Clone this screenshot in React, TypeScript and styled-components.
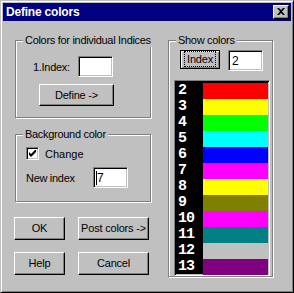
import React from 'react';
import styled, { createGlobalStyle } from 'styled-components';

const Global = createGlobalStyle`
  html, body { margin: 0; padding: 0; background: #c0c0c0; }
  body { font-family: "Liberation Sans", Arial, sans-serif; font-size: 11px; color: #000; }
  * { box-sizing: border-box; }
`;

const Window = styled.div`
  width: 294px;
  height: 293px;
  background: #c0c0c0;
  border: 1px solid;
  border-color: #c0c0c0 #000 #000 #c0c0c0;
  box-shadow: inset 1px 1px #fff, inset -1px -1px #808080;
  padding: 2px;
  display: flex;
  flex-direction: column;
`;

const TitleBar = styled.div`
  height: 18px;
  background: #000080;
  display: flex;
  align-items: center;
  justify-content: space-between;
  padding: 0 2px 0 3px;
`;

const TitleText = styled.span`
  color: #fff;
  font-weight: bold;
  font-size: 12px;
  letter-spacing: -0.2px;
`;

const CloseButton = styled.div`
  width: 16px;
  height: 14px;
  background: #c0c0c0;
  border: 1px solid;
  border-color: #fff #000 #000 #fff;
  box-shadow: inset -1px -1px #808080;
  display: flex;
  align-items: center;
  justify-content: center;
  padding-bottom: 1px;
  padding-right: 1px;
`;

const Body = styled.div`
  display: flex;
  padding: 19px 0 0 12px;
`;

const LeftCol = styled.div`
  width: 137px;
  display: flex;
  flex-direction: column;
`;

const Group = styled.div<{ $w: number; $h: number; $mt?: number; $pad: string }>`
  position: relative;
  width: ${p => p.$w}px;
  height: ${p => p.$h}px;
  margin-top: ${p => p.$mt ?? 0}px;
  padding: ${p => p.$pad};
  border: 1px solid #808080;
  box-shadow: inset 1px 1px #fff, 1px 1px #fff;
  display: flex;
  flex-direction: column;
  align-items: flex-start;
`;

const Caption = styled.span`
  position: absolute;
  top: -8px;
  left: 7px;
  padding: 0 2px;
  background: #c0c0c0;
  line-height: 14px;
  letter-spacing: -0.3px;
  white-space: nowrap;
`;

const Row = styled.div<{ $mt?: number; $ml?: number; $gap?: number; $top?: boolean }>`
  display: flex;
  align-items: ${p => (p.$top ? 'flex-start' : 'center')};
  margin-top: ${p => p.$mt ?? 0}px;
  margin-left: ${p => p.$ml ?? 0}px;
  gap: ${p => p.$gap ?? 0}px;
`;

const Label = styled.span<{ $w: number }>`
  width: ${p => p.$w}px;
  letter-spacing: -0.3px;
  white-space: nowrap;
`;

const Field = styled.div`
  width: 35px;
  height: 21px;
  background: #fff;
  border: 1px solid;
  border-color: #808080 #fff #fff #808080;
  box-shadow: inset 1px 1px #000, inset -1px -1px #c0c0c0;
  padding: 0 0 0 3px;
  display: flex;
  align-items: center;
  font-size: 12px;
`;

const Caret = styled.span`
  width: 1px;
  height: 14px;
  background: #000;
  margin-left: -1px;
`;

const Button = styled.div<{ $w: number; $h: number; $mt?: number; $ml?: number }>`
  width: ${p => p.$w}px;
  height: ${p => p.$h}px;
  margin-top: ${p => p.$mt ?? 0}px;
  margin-left: ${p => p.$ml ?? 0}px;
  background: #c0c0c0;
  border: 1px solid;
  border-color: #fff #000 #000 #fff;
  box-shadow: inset -1px -1px #808080;
  display: flex;
  align-items: center;
  justify-content: center;
  letter-spacing: -0.2px;
  white-space: nowrap;
  padding-bottom: 1px;
`;

const DefaultButton = styled(Button)`
  border-color: #000;
  box-shadow: inset 1px 1px #fff, inset -1px -1px #808080;
`;

const Focus = styled.span`
  outline: 1px dotted #000;
  outline-offset: 1px;
  padding: 0 1px;
  line-height: 12px;
`;

const CheckBox = styled.div`
  width: 13px;
  height: 13px;
  background: #fff;
  border: 1px solid;
  border-color: #808080 #fff #fff #808080;
  box-shadow: inset 1px 1px #000, inset -1px -1px #c0c0c0;
  display: flex;
  align-items: center;
  justify-content: center;
`;

const ButtonRow = styled.div<{ $mt: number }>`
  display: flex;
  gap: 13px;
  margin-top: ${p => p.$mt}px;
  margin-left: -1px;
`;

const RightGroup = styled(Group)`
  margin-left: 16px;
`;

const List = styled.div`
  width: 96px;
  height: 197px;
  margin-top: 9px;
  background: #000;
  border: 1px solid;
  border-color: #808080 #fff #fff #808080;
  box-shadow: inset 1px 1px #000, inset -1px -1px #c0c0c0;
  padding: 2px 2px 0 2px;
  display: grid;
  grid-template-columns: 26px 65px;
  grid-auto-rows: 16px;
  align-content: start;
`;

const Num = styled.span`
  color: #fff;
  font-family: "Liberation Mono", "DejaVu Sans Mono", monospace;
  font-weight: bold;
  font-size: 15px;
  letter-spacing: -1px;
  line-height: 16px;
  padding-left: 1px;
`;

const Swatch = styled.span<{ $c: string }>`
  background: ${p => p.$c};
`;

const colors: [number, string][] = [
  [2, '#ff0000'],
  [3, '#ffff00'],
  [4, '#00ff00'],
  [5, '#00ffff'],
  [6, '#0000ff'],
  [7, '#ff00ff'],
  [8, '#ffff00'],
  [9, '#808000'],
  [10, '#ff00ff'],
  [11, '#008080'],
  [12, '#c0c0c0'],
  [13, '#800080'],
];

export default function App() {
  return (
    <>
      <Global />
      <Window>
        <TitleBar>
          <TitleText>Define colors</TitleText>
          <CloseButton>
            <svg width="8" height="7" viewBox="0 0 8 7">
              <path d="M0 0h2l2 2 2-2h2L5 3.5 8 7H6L4 5 2 7H0l3-3.5z" fill="#000" />
            </svg>
          </CloseButton>
        </TitleBar>
        <Body>
          <LeftCol>
            <Group $w={136} $h={78} $pad="15px 0 0 17px">
              <Caption>Colors for individual Indices</Caption>
              <Row>
                <Label $w={45}>1.Index:</Label>
                <Field />
              </Row>
              <Button $w={75} $h={22} $mt={7} $ml={6}>Define -&gt;</Button>
            </Group>
            <Group $w={136} $h={68} $mt={16} $pad="12px 0 0 10px">
              <Caption>Background color</Caption>
              <Row $gap={6}>
                <CheckBox>
                  <svg width="7" height="7" viewBox="0 0 7 7">
                    <path d="M0 2v3l2 2 5-5V-1L2 4z" fill="#000" />
                  </svg>
                </CheckBox>
                <span>Change</span>
              </Row>
              <Row $mt={7}>
                <Label $w={67}>New index</Label>
                <Field>
                  <Caret />
                  7
                </Field>
              </Row>
            </Group>
            <ButtonRow $mt={15}>
              <Button $w={51} $h={23}>OK</Button>
              <Button $w={71} $h={23}>Post colors -&gt;</Button>
            </ButtonRow>
            <ButtonRow $mt={12}>
              <Button $w={51} $h={23}>Help</Button>
              <Button $w={71} $h={23}>Cancel</Button>
            </ButtonRow>
          </LeftCol>
          <RightGroup $w={105} $h={237} $pad="9px 0 0 5px">
            <Caption>Show colors</Caption>
            <Row $ml={6} $gap={8} $top>
              <DefaultButton $w={40} $h={19}>
                <Focus>Index</Focus>
              </DefaultButton>
              <Field>2</Field>
            </Row>
            <List>
              {colors.map(([n, c]) => (
                <React.Fragment key={n}>
                  <Num>{n}</Num>
                  <Swatch $c={c} />
                </React.Fragment>
              ))}
            </List>
          </RightGroup>
        </Body>
      </Window>
    </>
  );
}
